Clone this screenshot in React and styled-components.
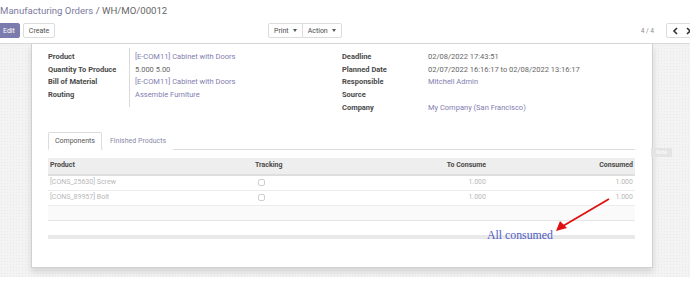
import React from "react";
import styled, { createGlobalStyle } from "styled-components";

const GlobalStyle = createGlobalStyle`
  html, body {
    margin: 0;
    padding: 0;
    background: #ffffff;
  }
  body {
    width: 690px;
    height: 288px;
    overflow: hidden;
    font-family: Roboto, "Liberation Sans", sans-serif;
    color: #4c4c4c;
  }
`;

const Page = styled.div`
  position: relative;
  width: 690px;
  height: 288px;
  overflow: hidden;
  background: #fff;
`;

const ControlPanel = styled.div`
  height: 43px;
  background: #fff;
  border-bottom: 1px solid #d8d8d8;
  display: flex;
  flex-direction: column;
`;

const Breadcrumb = styled.div`
  padding-top: 3px;
  height: 18px;
  font-size: 9.6px;
  line-height: 16px;
  color: #666;
  white-space: nowrap;
`;

const Crumb = styled.span`
  color: #7b7a9e;
`;

const ButtonRow = styled.div`
  display: grid;
  grid-template-columns: 268px 72px 1fr auto;
  align-items: center;
  margin-top: 1px;
  height: 17px;
`;

const Group = styled.div`
  display: flex;
  gap: ${(p) => p.gap || 0}px;
  margin-left: ${(p) => p.offset || 0}px;
  align-items: center;
`;

const Button = styled.div`
  height: 15px;
  padding: 0 ${(p) => p.pad || 5}px;
  box-sizing: border-box;
  display: flex;
  align-items: center;
  gap: 4px;
  font-size: 7px;
  border: 1px solid ${(p) => (p.primary ? "#7c7bad" : "#dcdcdc")};
  background: ${(p) => (p.primary ? "#7c7bad" : "#fff")};
  color: ${(p) => (p.primary ? "#fff" : "#4c4c4c")};
  border-radius: ${(p) => p.radius || "2px"};
  white-space: nowrap;
`;

const Caret = styled.span`
  width: 0;
  height: 0;
  border-left: 2.5px solid transparent;
  border-right: 2.5px solid transparent;
  border-top: 3px solid #555;
`;

const Pager = styled.div`
  display: flex;
  align-items: center;
  margin-right: -8px;
`;

const PagerValue = styled.span`
  font-size: 6.5px;
  color: #888;
  margin-right: 12px;
`;

const Content = styled.div`
  height: 233px;
  background-color: #f3f3f3;
  background-image: radial-gradient(#e9e9e9 0.6px, transparent 0.7px);
  background-size: 3px 3px;
  padding-left: 31px;
  box-sizing: border-box;
`;

const Sheet = styled.div`
  width: 622px;
  height: 224px;
  box-sizing: border-box;
  background: #fff;
  border: 1px solid #d0d0d0;
  border-top: none;
  box-shadow: 0 4px 6px rgba(0, 0, 0, 0.12);
  padding: 7px 17px 0 16px;
`;

const FieldGroups = styled.div`
  display: grid;
  grid-template-columns: 282px 1fr;
  column-gap: 12px;
  align-items: start;
`;

const FieldList = styled.div`
  display: grid;
  grid-template-columns: ${(p) => p.labelWidth}px 1fr;
  grid-auto-rows: minmax(12.7px, auto);
  position: relative;
`;

const Label = styled.div`
  font-size: 7.5px;
  font-weight: 700;
  color: #4a4a4a;
  line-height: 12.7px;
  white-space: pre-line;
`;

const Value = styled.div`
  font-size: 7.5px;
  line-height: 12.7px;
  color: ${(p) => (p.link ? "#7f7eb0" : "#666")};
  align-self: end;
  white-space: nowrap;
`;

const Separator = styled.div`
  position: absolute;
  left: 81px;
  top: -3px;
  bottom: -5px;
  width: 1px;
  background: #dadada;
`;

const Tabs = styled.div`
  display: flex;
  margin-top: 17px;
  height: 17px;
  border-bottom: 1px solid #dcdcdc;
`;

const Tab = styled.div`
  font-size: 7px;
  line-height: 16px;
  padding: 0 6px;
  margin-right: ${(p) => (p.active ? 1 : 0)}px;
  color: ${(p) => (p.active ? "#555" : "#8a8aa8")};
  border: 1px solid ${(p) => (p.active ? "#dcdcdc" : "transparent")};
  border-bottom: ${(p) => (p.active ? "1px solid #fff" : "none")};
  background: #fff;
  margin-bottom: -1px;
  border-radius: 2px 2px 0 0;
`;

const Table = styled.div`
  margin-top: 8px;
  display: grid;
  grid-template-columns: 205px 117px 118px 1fr;
`;

const HeadCell = styled.div`
  background: #eeeeee;
  border-bottom: 2px solid #dedede;
  height: 16px;
  font-size: 7px;
  font-weight: 700;
  color: #4a4a4a;
  line-height: 15px;
  padding: 0 2px;
  text-align: ${(p) => (p.right ? "right" : "left")};
`;

const Cell = styled.div`
  height: 15px;
  border-bottom: 1px solid #ececec;
  font-size: 7px;
  line-height: 15px;
  color: #b8b8b8;
  padding: 0 2px;
  white-space: nowrap;
  display: flex;
  align-items: center;
  justify-content: ${(p) => (p.right ? "flex-end" : "flex-start")};
  box-sizing: border-box;
`;

const Check = styled.span`
  width: 5px;
  height: 5px;
  border: 1px solid #cfcfcf;
  border-radius: 2px;
  margin-left: 3px;
`;

const Filler = styled.div`
  grid-column: 1 / -1;
  height: 14px;
  background: #fafafa;
  border-bottom: 1px solid #e6e6e6;
`;

const Footer = styled.div`
  grid-column: 1 / -1;
  height: 4px;
  margin-top: 14px;
  background: #e9e9e9;
`;

const NoteTag = styled.div`
  position: absolute;
  left: 651px;
  top: 148px;
  width: 21px;
  height: 9px;
  background: #e4e4e4;
  color: #fff;
  font-size: 5px;
  line-height: 9px;
  text-align: center;
`;

const Annotation = styled.div`
  position: absolute;
  left: 487px;
  top: 228px;
  font-family: "Liberation Serif", serif;
  font-size: 11.8px;
  color: #4d5cc4;
  white-space: nowrap;
`;

const Arrow = styled.svg`
  position: absolute;
  left: 550px;
  top: 195px;
  overflow: visible;
`;

const fieldsLeft = [
  ["Product", "[E-COM11] Cabinet with Doors", true],
  ["Quantity To Produce", "5.000 5.00", false],
  ["Bill of Material", "[E-COM11] Cabinet with Doors", true],
  ["Routing", "Assemble Furniture", true],
];

const fieldsRight = [
  ["Deadline", "02/08/2022 17:43:51", false],
  ["Planned Date", "02/07/2022 16:16:17 to 02/08/2022 13:16:17", false],
  ["Responsible", "Mitchell Admin", true],
  ["Source\nCompany", "My Company (San Francisco)", true],
];

const rows = [
  ["[CONS_25630] Screw", "1.000", "1.000"],
  ["[CONS_89957] Bolt", "1.000", "1.000"],
];

export default function App() {
  return (
    <Page>
      <GlobalStyle />
      <ControlPanel>
        <Breadcrumb>
          <Crumb>Manufacturing Orders</Crumb> / WH/MO/00012
        </Breadcrumb>
        <ButtonRow>
          <Group gap={3} offset={-2}>
            <Button primary pad={4}>Edit</Button>
            <Button>Create</Button>
          </Group>
          <Group>
            <Button radius="2px 0 0 2px">
              Print <Caret />
            </Button>
            <Button radius="0 2px 2px 0" style={{ marginLeft: -1 }}>
              Action <Caret />
            </Button>
          </Group>
          <div />
          <Pager>
            <PagerValue>4 / 4</PagerValue>
            <Button pad={5} radius="2px 0 0 2px">
              <svg width="20" height="8" viewBox="0 0 20 8">
                <path d="M5 1 L2 4 L5 7" fill="none" stroke="#333" strokeWidth="1.6" />
                <path d="M15 1 L18 4 L15 7" fill="none" stroke="#333" strokeWidth="1.6" />
              </svg>
            </Button>
          </Pager>
        </ButtonRow>
      </ControlPanel>
      <Content>
        <Sheet>
          <FieldGroups>
            <FieldList labelWidth={87}>
              <Separator />
              {fieldsLeft.map(([l, v, link]) => (
                <React.Fragment key={l}>
                  <Label>{l}</Label>
                  <Value link={link}>{v}</Value>
                </React.Fragment>
              ))}
            </FieldList>
            <FieldList labelWidth={86}>
              {fieldsRight.map(([l, v, link]) => (
                <React.Fragment key={l}>
                  <Label>{l}</Label>
                  <Value link={link}>{v}</Value>
                </React.Fragment>
              ))}
            </FieldList>
          </FieldGroups>
          <Tabs>
            <Tab active>Components</Tab>
            <Tab>Finished Products</Tab>
          </Tabs>
          <Table>
            <HeadCell>Product</HeadCell>
            <HeadCell>Tracking</HeadCell>
            <HeadCell right>To Consume</HeadCell>
            <HeadCell right>Consumed</HeadCell>
            {rows.map(([p, a, b]) => (
              <React.Fragment key={p}>
                <Cell>{p}</Cell>
                <Cell>
                  <Check />
                </Cell>
                <Cell right>{a}</Cell>
                <Cell right>{b}</Cell>
              </React.Fragment>
            ))}
            <Filler />
            <Footer />
          </Table>
        </Sheet>
      </Content>
      <NoteTag>Note</NoteTag>
      <Annotation>All consumed</Annotation>
      <Arrow width="60" height="40" viewBox="0 0 60 40">
        <line x1="59" y1="4" x2="13" y2="31" stroke="#e01010" strokeWidth="1.8" />
        <path d="M6 36 L10 26 L17 33 Z" fill="#e01010" />
      </Arrow>
    </Page>
  );
}
